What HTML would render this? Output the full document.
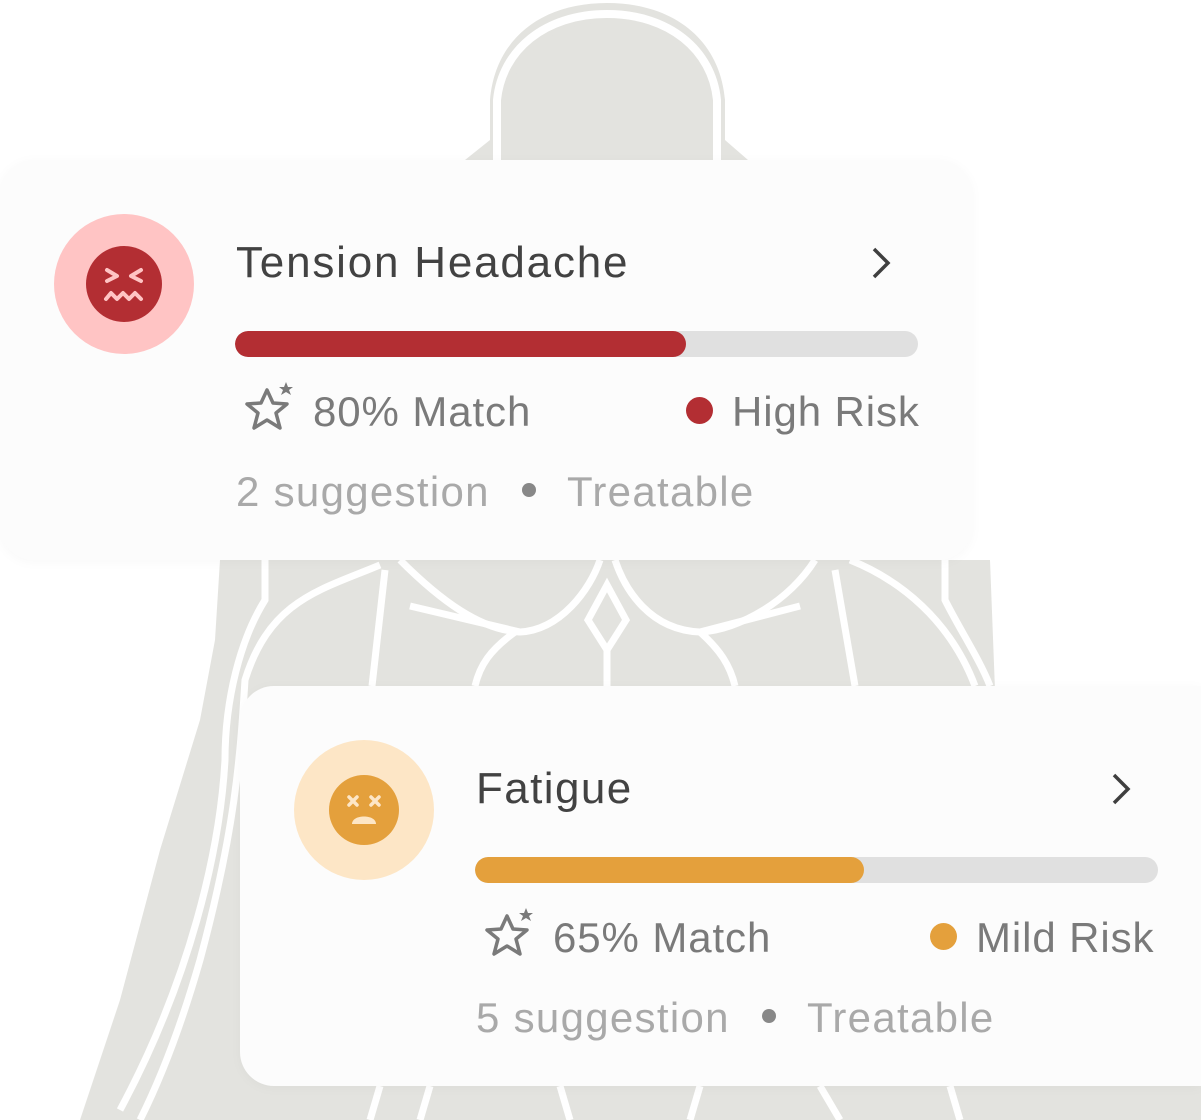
<!DOCTYPE html>
<html><head><meta charset="utf-8"><style>
*{margin:0;padding:0;box-sizing:border-box}
body{width:1201px;height:1120px;overflow:hidden;background:#fff;position:relative;font-family:"Liberation Sans",Arial,sans-serif}
svg.bg{position:absolute;left:0;top:0}
.card{position:absolute;width:972px;height:400px;background:#fcfcfc;border-radius:34px;box-shadow:0 2px 12px rgba(0,0,0,0.03)}
.t{position:absolute;white-space:nowrap;line-height:1}
.title{font-size:44px;color:#424242;left:236px;top:241px;letter-spacing:1.8px}
.bar{position:absolute;left:235px;top:331px;width:683px;height:26px;border-radius:13px;background:#e0e0e0;overflow:hidden}
.bar i{position:absolute;left:0;top:0;height:26px;border-radius:13px}
.m{font-size:42px;color:#7a7a7a;top:391px;letter-spacing:0.9px}
.s{font-size:42px;color:#a9a9a9;top:471px;letter-spacing:1.3px}
.dot{position:absolute;border-radius:50%}
</style></head><body>
<svg class="bg" width="1201" height="1120" viewBox="0 0 1201 1120">
<g fill="#e3e3df">
<path d="M465 160 L490 140 L490 100 C495 40 540 3 607 3 C674 3 720 40 725 100 L725 140 L748 160 Z"/>
</g>
<path d="M497 160 L497 100 C502 50 545 14 607 14 C669 14 712 50 717 100 L717 160" fill="none" stroke="#fff" stroke-width="8"/>
<path d="M506 160 L506 110 C510 60 550 22 607 22 C664 22 704 60 708 110 L708 160 Z" fill="#e3e3df"/>
<path d="M220 560 L990 560 L995 690 L1201 690 L1201 1120 L80 1120 L120 1000 L160 850 L200 720 L215 640 Z" fill="#e3e3df"/>
<g fill="none" stroke="#fff" stroke-width="7">
<path d="M265 560 L265 600 C240 640 225 700 225 760 C220 850 190 980 120 1110"/>
<path d="M380 565 C320 590 270 600 245 680 C240 760 235 830 200 960 C180 1030 160 1080 140 1120"/>
<path d="M385 570 L372 686"/>
<path d="M400 560 C440 600 480 630 520 632 C560 630 590 590 600 560"/>
<path d="M615 560 C625 590 650 630 700 632 C740 630 790 600 815 560"/>
<path d="M607 585 L588 620 L607 650 L626 620 Z"/>
<path d="M515 632 C490 650 480 665 475 686"/>
<path d="M700 632 C720 650 730 665 735 686"/>
<path d="M607 650 L607 686"/>
<path d="M410 606 L520 632 M700 632 L800 606"/>
<path d="M835 570 L855 686"/>
<path d="M850 560 C900 580 950 620 975 686"/>
<path d="M945 560 L945 600 C960 630 980 660 990 686"/>
<path d="M430 1086 L420 1120 M560 1086 L570 1120 M700 1086 L690 1120 M820 1086 L840 1120 M950 1086 L960 1120 M380 1086 L370 1120"/>
</g>
</svg>

<div class="card" style="left:0;top:160px"></div>
<div class="card" style="left:240px;top:686px;width:961px;border-radius:34px 0 0 34px"></div>

<!-- card 1 -->
<svg style="position:absolute;left:54px;top:214px" width="140" height="140" viewBox="0 0 140 140">
<circle cx="70" cy="70" r="70" fill="#ffc4c4"/><circle cx="70" cy="70" r="38" fill="#b32e33"/>
<g fill="none" stroke="#ffc4c4" stroke-width="4" stroke-linecap="round" stroke-linejoin="round">
<path d="M53 56 L63 62 L53 67 M87 56 L77 62 L87 67"/>
<path d="M52 85 L57 79 L63 85 L69 79 L75 85 L81 79 L87 85"/>
</g></svg>
<div class="t title">Tension Headache</div>
<svg style="position:absolute;left:868px;top:246px" width="26" height="34" viewBox="0 0 26 34"><path d="M6 3 L20 17 L6 31" fill="none" stroke="#3f3f3f" stroke-width="3.5"/></svg>
<div class="bar"><i style="width:451px;background:#b32e33"></i></div>
<svg style="position:absolute;left:243px;top:381px" width="52" height="52" viewBox="0 0 52 52">
<path d="M24 9 L30 22 L44 23 L33 32 L37 47 L24 39 L11 47 L15 32 L4 23 L18 22 Z" fill="none" stroke="#7a7a7a" stroke-width="3.5" stroke-linejoin="round"/>
<path d="M43 1 L45 6 L50 6 L46 9 L48 14 L43 11 L38 14 L40 9 L36 6 L41 6 Z" fill="#7a7a7a"/></svg>
<div class="t m" style="left:313px">80% Match</div>
<div class="dot" style="left:686px;top:397px;width:27px;height:27px;background:#b32e33"></div>
<div class="t m" style="left:732px">High Risk</div>
<div class="t s" style="left:236px">2 suggestion</div>
<div class="dot" style="left:522px;top:483px;width:14px;height:14px;background:#888"></div>
<div class="t s" style="left:567px">Treatable</div>

<!-- card 2 -->
<div style="position:absolute;left:240px;top:526px;width:961px;height:594px;overflow:hidden">
<svg style="position:absolute;left:54px;top:214px" width="140" height="140" viewBox="0 0 140 140">
<circle cx="70" cy="70" r="70" fill="#fde6c6"/><circle cx="70" cy="70" r="35" fill="#e4a03c"/>
<g stroke="#fde6c6" stroke-width="3.5" stroke-linecap="round"><path d="M55 57 L63 65 M63 57 L55 65 M77 57 L85 65 M85 57 L77 65"/></g>
<path d="M58 84 C58 74 82 74 82 84 Z" fill="#fde6c6"/></svg>
<div class="t title" style="top:241px;letter-spacing:1.4px">Fatigue</div>
<svg style="position:absolute;left:868px;top:246px" width="26" height="34" viewBox="0 0 26 34"><path d="M6 3 L20 17 L6 31" fill="none" stroke="#3f3f3f" stroke-width="3.5"/></svg>
<div class="bar"><i style="width:389px;background:#e4a03c"></i></div>
<svg style="position:absolute;left:243px;top:381px" width="52" height="52" viewBox="0 0 52 52">
<path d="M24 9 L30 22 L44 23 L33 32 L37 47 L24 39 L11 47 L15 32 L4 23 L18 22 Z" fill="none" stroke="#7a7a7a" stroke-width="3.5" stroke-linejoin="round"/>
<path d="M43 1 L45 6 L50 6 L46 9 L48 14 L43 11 L38 14 L40 9 L36 6 L41 6 Z" fill="#7a7a7a"/></svg>
<div class="t m" style="left:313px">65% Match</div>
<div class="dot" style="left:690px;top:397px;width:27px;height:27px;background:#e4a03c"></div>
<div class="t m" style="left:736px">Mild Risk</div>
<div class="t s" style="left:236px">5 suggestion</div>
<div class="dot" style="left:522px;top:483px;width:14px;height:14px;background:#888"></div>
<div class="t s" style="left:567px">Treatable</div>
</div>
</body></html>
